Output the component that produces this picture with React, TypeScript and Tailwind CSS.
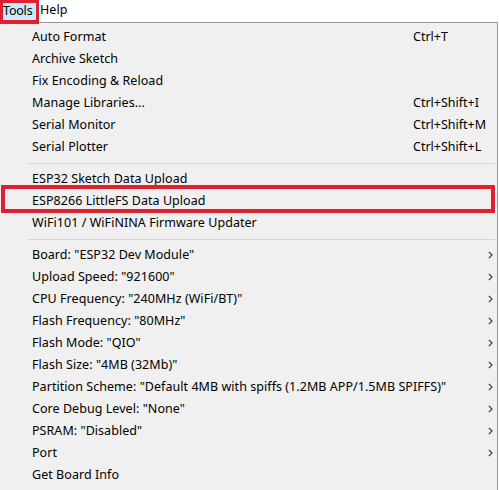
import React from "react";

type Item = { label: string; shortcut?: string; sub?: boolean; boxed?: boolean };

const groupA: Item[] = [
  { label: "Auto Format", shortcut: "Ctrl+T" },
  { label: "Archive Sketch" },
  { label: "Fix Encoding & Reload" },
  { label: "Manage Libraries...", shortcut: "Ctrl+Shift+I" },
  { label: "Serial Monitor", shortcut: "Ctrl+Shift+M" },
  { label: "Serial Plotter", shortcut: "Ctrl+Shift+L" },
];

const groupB: Item[] = [
  { label: "ESP32 Sketch Data Upload" },
  { label: "ESP8266 LittleFS Data Upload", boxed: true },
  { label: "WiFi101 / WiFiNINA Firmware Updater" },
];

const groupC: Item[] = [
  { label: 'Board: "ESP32 Dev Module"', sub: true },
  { label: 'Upload Speed: "921600"', sub: true },
  { label: 'CPU Frequency: "240MHz (WiFi/BT)"', sub: true },
  { label: 'Flash Frequency: "80MHz"', sub: true },
  { label: 'Flash Mode: "QIO"', sub: true },
  { label: 'Flash Size: "4MB (32Mb)"', sub: true },
  { label: 'Partition Scheme: "Default 4MB with spiffs (1.2MB APP/1.5MB SPIFFS)"', sub: true },
  { label: 'Core Debug Level: "None"', sub: true },
  { label: 'PSRAM: "Disabled"', sub: true },
  { label: "Port", sub: true },
  { label: "Get Board Info" },
];

function Chevron() {
  return (
    <svg width="5" height="8" viewBox="0 0 5 8" className="text-[#333]">
      <path d="M0.8 0.8 L4 4 L0.8 7.2" fill="none" stroke="currentColor" strokeWidth="1.1" />
    </svg>
  );
}

function Row({ item }: { item: Item }) {
  return (
    <div className="relative flex h-[22px] items-center">
      <span className="pl-[32px] whitespace-nowrap">{item.label}</span>
      {item.shortcut && (
        <span className="absolute left-[413px] whitespace-nowrap tracking-[0px]">{item.shortcut}</span>
      )}
      {item.sub && (
        <span className="absolute left-[488px] top-[7px] flex">
          <Chevron />
        </span>
      )}
      {item.boxed && (
        <div className="pointer-events-none absolute left-[1px] top-[-5px] h-[28px] w-[494px] border-[4px] border-[#e0202e]" />
      )}
    </div>
  );
}

function Sep() {
  return (
    <div className="flex h-[10px] items-center pl-[28px] pr-[2px]">
      <div className="h-px w-full bg-[#d5d5d5]" />
    </div>
  );
}

export default function App() {
  return (
    <div
      className="h-[490px] w-[499px] overflow-hidden bg-white text-[12.5px] tracking-[0.05px] text-black"
      style={{ fontFamily: '"Segoe UI", "Noto Sans", "Open Sans", sans-serif' }}
    >
      <div className="flex h-[22px] items-start bg-white">
        <div className="relative h-[24px] w-[39px] border-[3px] border-[#e0202e] bg-[#e0202e]">
          <div className="flex h-[17px] w-full items-center bg-[#cce8ff] leading-none tracking-[-0.2px]">Tools</div>
        </div>
        <div className="flex h-[20px] items-center pl-[1px] leading-none">Help</div>
      </div>
      <div className="h-[468px] w-[498px] border-t border-r border-[#979797] bg-[#f0f0f0] pt-[3px]">
        {groupA.map((i) => (
          <Row key={i.label} item={i} />
        ))}
        <Sep />
        {groupB.map((i) => (
          <Row key={i.label} item={i} />
        ))}
        <Sep />
        {groupC.map((i) => (
          <Row key={i.label} item={i} />
        ))}
      </div>
    </div>
  );
}
